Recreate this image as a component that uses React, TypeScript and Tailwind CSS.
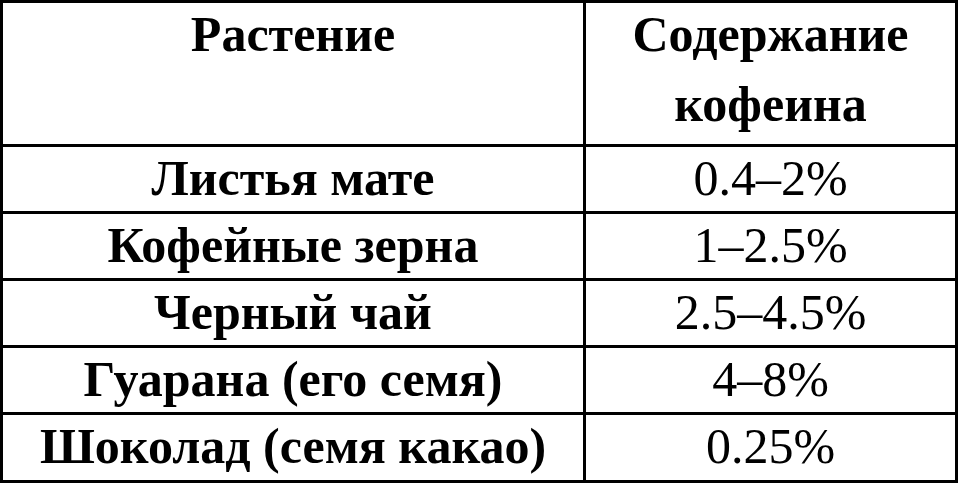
const rows = [
  { plant: 'Листья мате', value: '0.4–2%' },
  { plant: 'Кофейные зерна', value: '1–2.5%' },
  { plant: 'Черный чай', value: '2.5–4.5%' },
  { plant: 'Гуарана (его семя)', value: '4–8%' },
  { plant: 'Шоколад (семя какао)', value: '0.25%' },
];

export default function App() {
  return (
    <div className="w-[958px] h-[483px] bg-white text-black font-['Liberation_Serif','Times_New_Roman',serif]">
      <div className="grid grid-cols-[580px_1fr] grid-rows-[141px_repeat(4,64px)_65px] gap-[3px] p-[3px] bg-black h-full">
        <div className="bg-white text-center font-bold text-[50px] leading-[70px]">
          <div className="-mt-[4px]">Растение</div>
        </div>
        <div className="bg-white text-center font-bold text-[50px] leading-[70px]">
          <div className="-mt-[4px]">
            Содержание
            <br />
            кофеина
          </div>
        </div>
        {rows.map((r) => (
          <>
            <div key={r.plant} className="bg-white flex items-center justify-center pb-[3px] font-bold text-[50px] leading-none">
              {r.plant}
            </div>
            <div key={r.value} className="bg-white flex items-center justify-center pb-[3px] text-[50px] leading-none">
              {r.value}
            </div>
          </>
        ))}
      </div>
    </div>
  );
}
